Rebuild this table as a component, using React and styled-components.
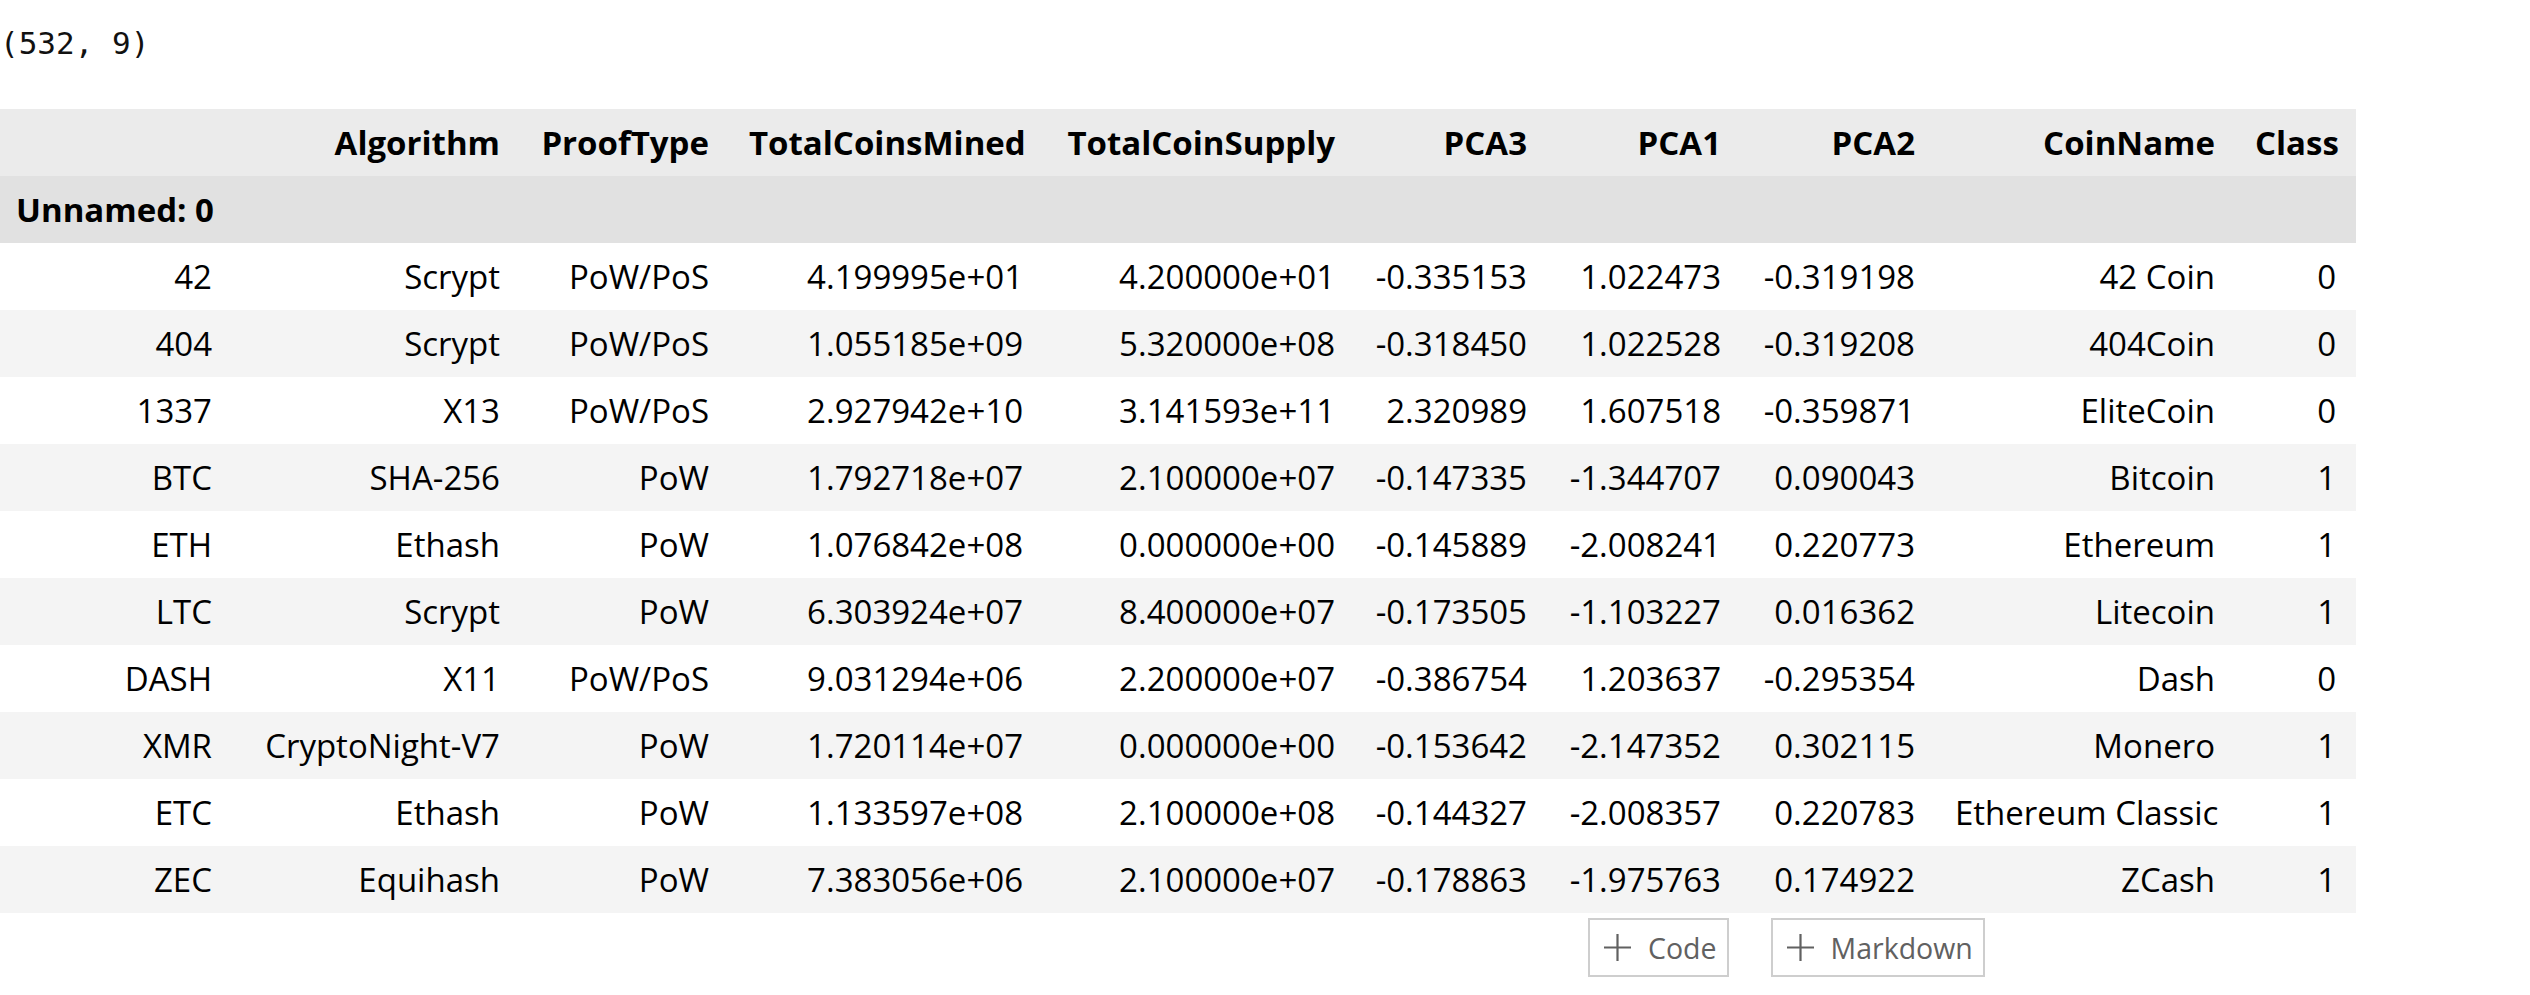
import React from "react";
import styled, { createGlobalStyle } from "styled-components";

const Global = createGlobalStyle`
  html, body { margin: 0; padding: 0; background: #ffffff; }
  body { font-family: "Open Sans", "Noto Sans", sans-serif; color: #000; }
`;

const Page = styled.div`
  display: flex;
  flex-direction: column;
  width: 2530px;
`;

const ShapeOutput = styled.pre`
  margin: 0;
  height: 109px;
  padding-top: 25px;
  box-sizing: border-box;
  font-family: "DejaVu Sans Mono", "Liberation Mono", monospace;
  font-size: 31px;
  line-height: 36px;
  color: #111;
`;

const Table = styled.table`
  border-collapse: collapse;
  border-spacing: 0;
  table-layout: fixed;
  width: 2356px;
  font-size: 33px;
`;

const HeadRow = styled.tr`
  background: ${(p) => (p.$index ? "#e1e1e1" : "#ebebeb")};
  height: 67px;
`;

const Row = styled.tr`
  background: ${(p) => (p.$stripe ? "#f4f4f4" : "#ffffff")};
  height: 67px;
`;

const Th = styled.th`
  padding: 0 20px 0 ${(p) => (p.$first ? "16px" : "20px")};
  text-align: ${(p) => (p.$left ? "left" : "right")};
  font-weight: ${(p) => (p.$plain ? 400 : 700)};
  white-space: nowrap;
  vertical-align: middle;
`;

const Td = styled.td`
  padding: 0 20px;
  text-align: right;
  font-weight: 400;
  white-space: nowrap;
  vertical-align: middle;
`;

const Actions = styled.div`
  display: flex;
  gap: 42px;
  padding-left: 1588px;
  margin-top: 5px;
`;

const AddButton = styled.button`
  display: flex;
  align-items: center;
  gap: 16px;
  height: 59px;
  box-sizing: border-box;
  padding: 0 10px 0 13px;
  background: #fff;
  border: 2px solid #cecece;
  color: #616161;
  font-family: "Open Sans", "Noto Sans", sans-serif;
  font-size: 28.5px;
  cursor: pointer;
`;

const PlusIcon = () => (
  <svg width="29" height="29" viewBox="0 0 29 29" aria-hidden="true">
    <path d="M14.5 1v27M1 14.5h27" stroke="#616161" strokeWidth="2.2" fill="none" />
  </svg>
);

const widths = [232, 288, 209, 314, 312, 192, 194, 194, 300, 121];
const columns = [
  "Algorithm",
  "ProofType",
  "TotalCoinsMined",
  "TotalCoinSupply",
  "PCA3",
  "PCA1",
  "PCA2",
  "CoinName",
  "Class",
];

const rows = [
  ["42", "Scrypt", "PoW/PoS", "4.199995e+01", "4.200000e+01", "-0.335153", "1.022473", "-0.319198", "42 Coin", "0"],
  ["404", "Scrypt", "PoW/PoS", "1.055185e+09", "5.320000e+08", "-0.318450", "1.022528", "-0.319208", "404Coin", "0"],
  ["1337", "X13", "PoW/PoS", "2.927942e+10", "3.141593e+11", "2.320989", "1.607518", "-0.359871", "EliteCoin", "0"],
  ["BTC", "SHA-256", "PoW", "1.792718e+07", "2.100000e+07", "-0.147335", "-1.344707", "0.090043", "Bitcoin", "1"],
  ["ETH", "Ethash", "PoW", "1.076842e+08", "0.000000e+00", "-0.145889", "-2.008241", "0.220773", "Ethereum", "1"],
  ["LTC", "Scrypt", "PoW", "6.303924e+07", "8.400000e+07", "-0.173505", "-1.103227", "0.016362", "Litecoin", "1"],
  ["DASH", "X11", "PoW/PoS", "9.031294e+06", "2.200000e+07", "-0.386754", "1.203637", "-0.295354", "Dash", "0"],
  ["XMR", "CryptoNight-V7", "PoW", "1.720114e+07", "0.000000e+00", "-0.153642", "-2.147352", "0.302115", "Monero", "1"],
  ["ETC", "Ethash", "PoW", "1.133597e+08", "2.100000e+08", "-0.144327", "-2.008357", "0.220783", "Ethereum Classic", "1"],
  ["ZEC", "Equihash", "PoW", "7.383056e+06", "2.100000e+07", "-0.178863", "-1.975763", "0.174922", "ZCash", "1"],
];

export default function App() {
  return (
    <Page>
      <Global />
      <ShapeOutput>(532, 9)</ShapeOutput>
      <Table>
        <colgroup>
          {widths.map((w, i) => (
            <col key={i} style={{ width: w }} />
          ))}
        </colgroup>
        <thead>
          <HeadRow>
            <Th $first />
            {columns.map((c) => (
              <Th key={c}>{c}</Th>
            ))}
          </HeadRow>
          <HeadRow $index>
            <Th $first $left>Unnamed: 0</Th>
            {columns.map((c) => (
              <Th key={c} />
            ))}
          </HeadRow>
        </thead>
        <tbody>
          {rows.map((r, i) => (
            <Row key={r[0]} $stripe={i % 2 === 1}>
              {r.map((v, j) =>
                j === 0 ? (
                  <Th key={j} $plain>
                    {v}
                  </Th>
                ) : (
                  <Td key={j}>{v}</Td>
                )
              )}
            </Row>
          ))}
        </tbody>
      </Table>
      <Actions>
        <AddButton>
          <PlusIcon />
          Code
        </AddButton>
        <AddButton>
          <PlusIcon />
          Markdown
        </AddButton>
      </Actions>
    </Page>
  );
}
